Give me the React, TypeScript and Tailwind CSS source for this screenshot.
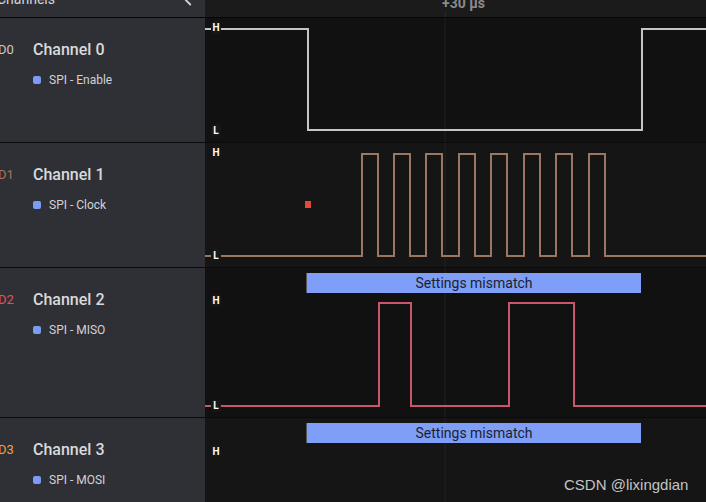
import { ChevronLeft } from 'lucide-react'

type Channel = {
  id: string
  name: string
  protocol: string
  idColor: string
  lineColor: string
  height: number
  bg: string
  path: string
  high: number
  low: number
  mismatch?: boolean
}

const channels: Channel[] = [
  {
    id: 'D0',
    name: 'Channel 0',
    protocol: 'SPI - Enable',
    idColor: 'text-[#c9c9c9]',
    lineColor: '#c4c4c4',
    height: 124,
    bg: 'bg-[#111111]',
    path: 'M0 11 H103 V112 H437 V11 H501',
    high: 10,
    low: 113,
  },
  {
    id: 'D1',
    name: 'Channel 1',
    protocol: 'SPI - Clock',
    idColor: 'text-[#a8735c]',
    lineColor: '#9d7662',
    height: 124,
    bg: 'bg-[#151515]',
    path:
      'M0 113 H157 V11 H173 V113 H189 V11 H205 V113 H221 V11 H237 V113 H254 V11 H270 V113 H286 V11 H302 V113 H319 V11 H335 V113 H351 V11 H367 V113 H384 V11 H400 V113 H501',
    high: 10,
    low: 113,
  },
  {
    id: 'D2',
    name: 'Channel 2',
    protocol: 'SPI - MISO',
    idColor: 'text-[#e0505e]',
    lineColor: '#c9566a',
    height: 149,
    bg: 'bg-[#111111]',
    path: 'M0 138 H174 V35 H206 V138 H304 V35 H369 V138 H501',
    high: 33,
    low: 138,
    mismatch: true,
  },
  {
    id: 'D3',
    name: 'Channel 3',
    protocol: 'SPI - MOSI',
    idColor: 'text-[#eba246]',
    lineColor: '#c8a060',
    height: 149,
    bg: 'bg-[#151515]',
    path: 'M0 138 H501',
    high: 34,
    low: 138,
    mismatch: true,
  },
]

function Level({ text, y }: { text: string; y: number }) {
  return (
    <span
      className="absolute left-[6px] flex h-[13px] w-[10px] items-center justify-center rounded-sm bg-[#171717] text-[10px] font-bold leading-none text-white"
      style={{ top: y - 7 }}
    >
      {text}
    </span>
  )
}

function Row({ ch, last }: { ch: Channel; last: boolean }) {
  return (
    <div
      className={`flex shrink-0 ${last ? '' : 'border-b border-[#0a0a0a]'}`}
      style={{ height: ch.height + (last ? 0 : 1) }}
    >
      <div className="w-[205px] shrink-0 bg-[#2f3035] pt-[20px]">
        <div className="flex items-center">
          <span className={`-ml-[2px] w-[35px] text-[13px] ${ch.idColor}`}>{ch.id}</span>
          <span className="text-[16px] font-medium text-[#d9d9dc]">{ch.name}</span>
        </div>
        <div className="mt-[9px] flex items-center gap-[8px] pl-[33px]">
          <span className="h-[8px] w-[8px] rounded-[2px] bg-[#7b9cf5]" />
          <span className="text-[12px] text-[#d2d2d6]">{ch.protocol}</span>
        </div>
      </div>
      <div className={`relative flex-1 overflow-hidden ${ch.bg}`}>
        <svg className="absolute left-0 top-0" width="501" height={ch.height}>
          <line x1="240" y1="0" x2="240" y2={ch.height} stroke="#222222" strokeWidth="1" />
          <path d={ch.path} fill="none" stroke={ch.lineColor} strokeWidth="2" />
          {ch.id === 'D1' && <rect x="100" y="58" width="6" height="7" fill="#e04a38" />}
        </svg>
        {ch.mismatch && (
          <div className="absolute left-[101px] top-[5px] flex h-[20px] w-[335px] items-center justify-center border-l border-[#555] bg-[#7e9ef8] text-[14px] text-[#1b1f2e]">
            Settings mismatch
          </div>
        )}
        <Level text="H" y={ch.high} />
        <Level text="L" y={ch.low} />
      </div>
    </div>
  )
}

export default function App() {
  return (
    <div className="relative flex h-[502px] w-[706px] flex-col overflow-hidden bg-[#111111] font-['Roboto',sans-serif]">
      <div className="flex h-[18px] shrink-0 border-b border-[#050505]">
        <div className="relative w-[205px] shrink-0 overflow-hidden bg-[#2f3035]">
          <span className="absolute -left-[3px] -top-[11px] text-[14px] text-[#d5d5d8]">Channels</span>
          <ChevronLeft className="absolute left-[179px] -top-[9px] text-[#cfcfd2]" size={18} strokeWidth={2.5} />
        </div>
        <div className="relative flex-1 overflow-hidden bg-[#1b1b1b]">
          <span className="absolute left-[237px] -top-[7px] text-[14px] font-bold text-[#8b8b8b]">+30 µs</span>
          <div className="absolute bottom-0 left-[240px] h-[5px] w-px bg-[#2a2a2a]" />
        </div>
      </div>
      {channels.map((ch, i) => (
        <Row key={ch.id} ch={ch} last={i === channels.length - 1} />
      ))}
      <span className="absolute left-[564px] top-[474px] font-['Liberation_Sans',sans-serif] text-[15px] text-[#c4c4c4]">
        CSDN @lixingdian
      </span>
    </div>
  )
}
